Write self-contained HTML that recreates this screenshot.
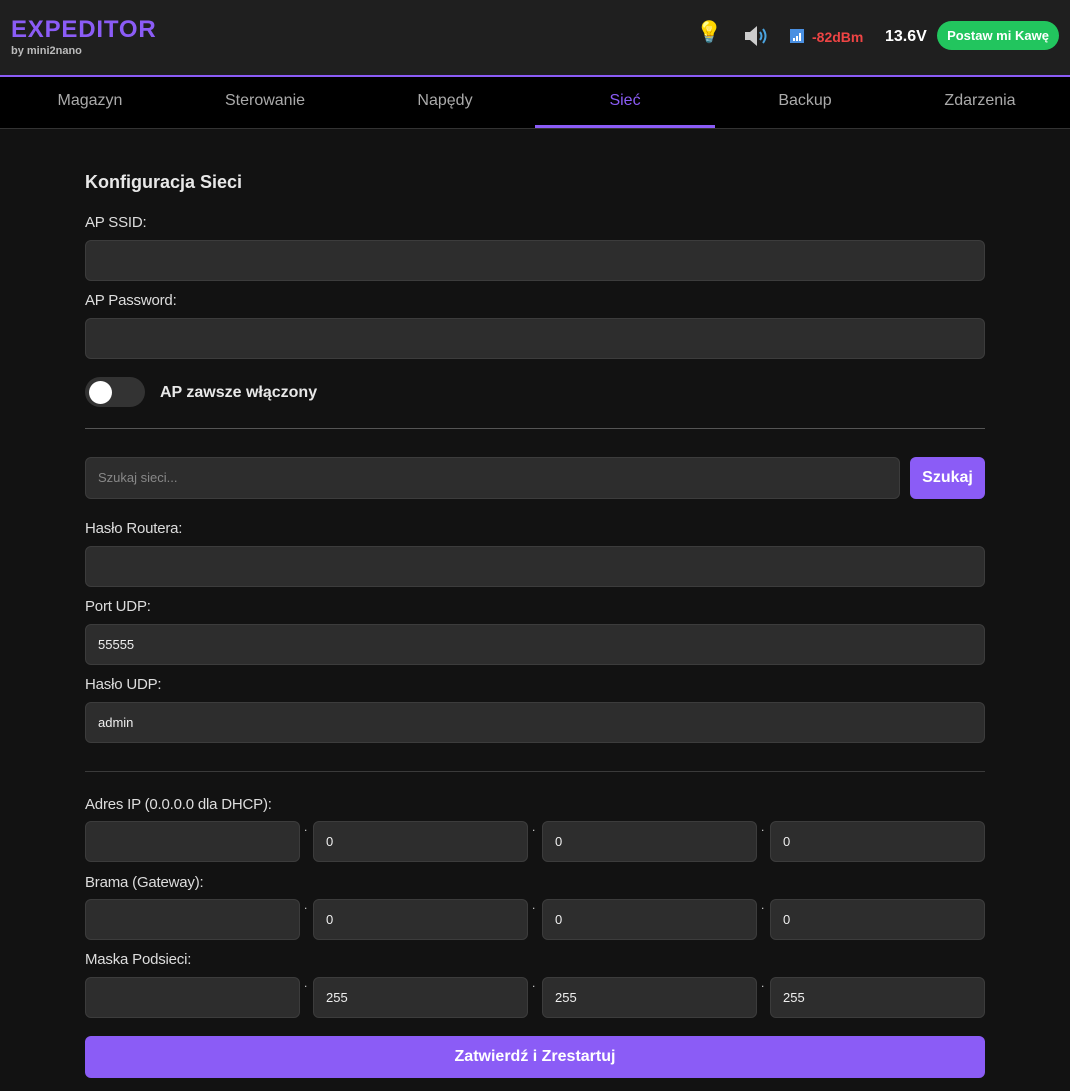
<!DOCTYPE html>
<html><head><meta charset="utf-8"><style>
*{box-sizing:border-box;margin:0;padding:0}
body{width:1070px;height:1091px;background:#121212;font-family:"Liberation Sans",sans-serif;color:#e0e0e0;position:relative;overflow:hidden}
.hdr{position:absolute;left:0;top:0;width:1070px;background:#1f1f1f;border-bottom:2px solid #8b5cf6;height:77px}
.logo{position:absolute;left:11px;top:16px;font-weight:bold;font-size:24px;color:#8b5cf6;letter-spacing:0.8px}
.by{position:absolute;left:11px;top:45px;font-size:11px;font-weight:bold;color:#bbb}
.nav{position:absolute;left:0;top:77px;width:1070px;height:52px;background:#000;border-bottom:1px solid #333}
.nav div{position:absolute;top:0;height:51px;width:180px;text-align:center;line-height:48px;font-size:16px;color:#aaa}
.nav .act{color:#8b5cf6;border-bottom:3px solid #8b5cf6}
.a{position:absolute}
.lbl{position:absolute;left:85px;font-size:15px;color:#ddd;letter-spacing:-0.2px}
.in{position:absolute;background:#2d2d2d;border:1px solid #3c3c3c;border-radius:6px;height:41px;font-size:13px;color:#eee;padding-left:12px;line-height:39px}
.hr{position:absolute;left:85px;width:900px;height:1px;background:#555}
.dot{position:absolute;font-size:12px;color:#ccc}
</style></head><body>
<div class="hdr">
<div class="logo">EXPEDITOR</div>
<div class="by">by mini2nano</div>
<div class="a" style="left:696px;top:21px;font-size:21px">💡</div>
<svg class="a" style="left:743px;top:25px" width="26" height="22" viewBox="0 0 26 22"><path d="M2 7h5l7-6v20l-7-6H2z" fill="#ccc"/><path d="M17 7q3 4 0 8M20 4q5 7 0 14" stroke="#4aa3df" stroke-width="2" fill="none"/></svg>
<svg class="a" style="left:790px;top:29px" width="14" height="14"><rect width="14" height="14" fill="#4a90e2"/><rect x="3" y="9" width="2" height="3" fill="#fff"/><rect x="6" y="7" width="2" height="5" fill="#fff"/><rect x="9" y="4" width="2" height="8" fill="#fff"/></svg>
<div class="a" style="left:812px;top:29px;font-weight:bold;font-size:14px;color:#ef4444">-82dBm</div>
<div class="a" style="left:885px;top:28px;font-weight:bold;font-size:16px;color:#fff">13.6V</div>
<div class="a" style="left:937px;top:21px;width:122px;height:29px;border-radius:15px;background:#22c55e;color:#fff;font-weight:bold;font-size:13px;text-align:center;line-height:29px">Postaw mi Kawę</div>
</div>
<div class="nav">
<div style="left:0">Magazyn</div><div style="left:175px">Sterowanie</div><div style="left:355px">Napędy</div><div class="act" style="left:535px">Sieć</div><div style="left:715px">Backup</div><div style="left:890px">Zdarzenia</div>
</div>
<div class="a" style="left:85px;top:172px;font-weight:bold;font-size:18px;color:#e8e8e8">Konfiguracja Sieci</div>
<div class="lbl" style="top:214px">AP SSID:</div>
<div class="in" style="left:85px;top:240px;width:900px"></div>
<div class="lbl" style="top:292px">AP Password:</div>
<div class="in" style="left:85px;top:318px;width:900px"></div>
<div class="a" style="left:85px;top:377px;width:60px;height:30px;border-radius:15px;background:#333"></div>
<div class="a" style="left:89px;top:381px;width:23px;height:23px;border-radius:50%;background:#fff"></div>
<div class="a" style="left:160px;top:384px;font-weight:bold;font-size:16px;color:#e8e8e8">AP zawsze włączony</div>
<div class="hr" style="top:428px"></div>
<div class="in" style="left:85px;top:457px;width:815px;height:42px;color:#888;line-height:40px">Szukaj sieci...</div>
<div class="a" style="left:910px;top:457px;width:75px;height:42px;border-radius:6px;background:#8b5cf6;color:#fff;font-weight:bold;font-size:16px;text-align:center;line-height:42px">Szukaj</div>
<div class="lbl" style="top:520px">Hasło Routera:</div>
<div class="in" style="left:85px;top:546px;width:900px"></div>
<div class="lbl" style="top:598px">Port UDP:</div>
<div class="in" style="left:85px;top:624px;width:900px">55555</div>
<div class="lbl" style="top:676px">Hasło UDP:</div>
<div class="in" style="left:85px;top:702px;width:900px">admin</div>
<div class="hr" style="top:771px;background:#3a3a3a"></div>
<div class="lbl" style="top:796px">Adres IP (0.0.0.0 dla DHCP):</div>
<div class="in" style="left:85px;top:821px;width:215px"></div><div class="dot" style="left:304px;top:820px">.</div>
<div class="in" style="left:313px;top:821px;width:215px">0</div><div class="dot" style="left:532px;top:820px">.</div>
<div class="in" style="left:542px;top:821px;width:215px">0</div><div class="dot" style="left:761px;top:820px">.</div>
<div class="in" style="left:770px;top:821px;width:215px">0</div>
<div class="lbl" style="top:874px">Brama (Gateway):</div>
<div class="in" style="left:85px;top:899px;width:215px"></div><div class="dot" style="left:304px;top:898px">.</div>
<div class="in" style="left:313px;top:899px;width:215px">0</div><div class="dot" style="left:532px;top:898px">.</div>
<div class="in" style="left:542px;top:899px;width:215px">0</div><div class="dot" style="left:761px;top:898px">.</div>
<div class="in" style="left:770px;top:899px;width:215px">0</div>
<div class="lbl" style="top:951px">Maska Podsieci:</div>
<div class="in" style="left:85px;top:977px;width:215px"></div><div class="dot" style="left:304px;top:976px">.</div>
<div class="in" style="left:313px;top:977px;width:215px">255</div><div class="dot" style="left:532px;top:976px">.</div>
<div class="in" style="left:542px;top:977px;width:215px">255</div><div class="dot" style="left:761px;top:976px">.</div>
<div class="in" style="left:770px;top:977px;width:215px">255</div>
<div class="a" style="left:85px;top:1036px;width:900px;height:42px;border-radius:6px;background:#8b5cf6;color:#fff;font-weight:bold;font-size:16px;text-align:center;line-height:42px">Zatwierdź i Zrestartuj</div>
</body></html>
